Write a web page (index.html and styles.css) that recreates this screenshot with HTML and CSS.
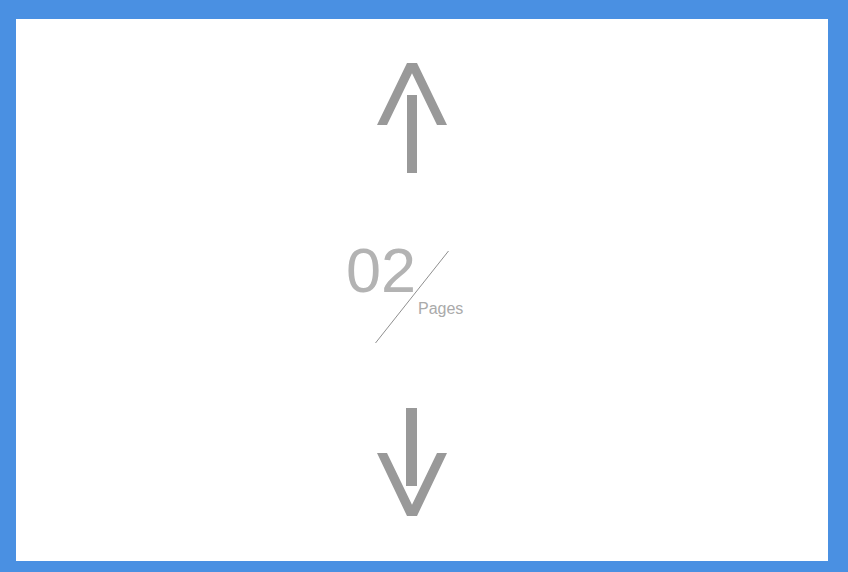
FILE: index.html
```html
<!DOCTYPE html>
<html>
<head>
<meta charset="utf-8">
<link rel="stylesheet" href="styles.css">
</head>
<body>
<div class="frame">
  <div class="stack">
    <svg class="arrow arrow-up" width="70" height="110" viewBox="0 0 70 110">
      <polygon points="30,0 40,0 70,62 60,62 35,10.3 10,62 0,62" fill="#999999"/>
      <rect x="30" y="32" width="10" height="78" fill="#999999"/>
    </svg>
    <div class="counter">
      <div class="num">02</div>
      <div class="label">Pages</div>
      <svg class="slash" width="120" height="106" viewBox="0 0 120 106">
        <line x1="103.5" y1="12" x2="30.5" y2="104" stroke="#8f8f8f" stroke-width="1"/>
      </svg>
    </div>
    <svg class="arrow arrow-down" width="70" height="108" viewBox="0 0 70 108">
      <rect x="29" y="0" width="11" height="78" fill="#999999"/>
      <polygon points="0,45 10,45 35,96.7 60,45 70,45 40,108 30,108" fill="#999999"/>
    </svg>
  </div>
</div>
</body>
</html>
```

FILE: styles.css
```css
html, body {
  margin: 0;
  padding: 0;
}
body {
  background: #4a90e2;
  width: 848px;
  height: 572px;
  overflow: hidden;
  font-family: "Liberation Sans", Arial, sans-serif;
}
.frame {
  background: #ffffff;
  margin: 19px 20px 0 16px;
  height: 542px;
}
.stack {
  display: flex;
  flex-direction: column;
  align-items: flex-start;
  padding: 44px 0 0 330px;
}
.arrow {
  display: block;
  margin-left: 31px;
}
.counter {
  position: relative;
  margin-top: 66px;
  width: 120px;
  height: 104px;
}
.num {
  font-size: 63px;
  line-height: 63px;
  height: 63px;
  color: #b3b3b3;
}
.label {
  margin-top: -1px;
  margin-left: 72px;
  font-size: 16px;
  line-height: 16px;
  color: #aaaaaa;
}
.slash {
  position: absolute;
  left: -1px;
  top: 0;
}
.arrow-down {
  margin-top: 65px;
}
```
